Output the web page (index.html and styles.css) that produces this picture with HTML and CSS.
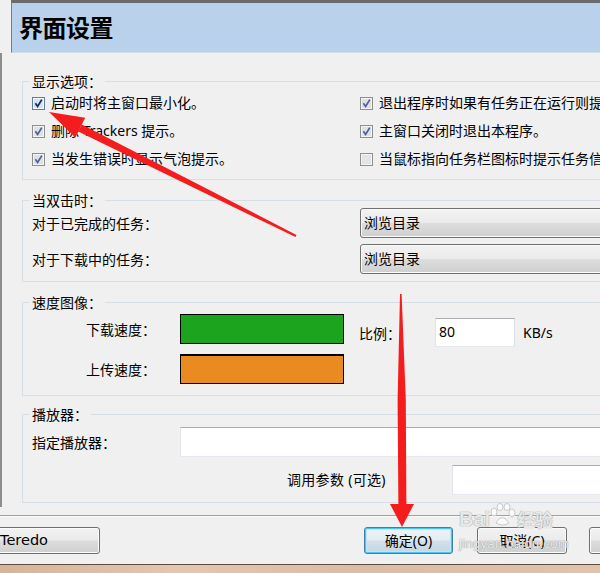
FILE: index.html
```html
<!DOCTYPE html>
<html lang="zh-CN">
<head>
<meta charset="utf-8">
<title>界面设置</title>
<link rel="stylesheet" href="styles.css">
</head>
<body>
<div class="window">
  <header class="titlebar"><h1 class="title">界面设置</h1></header>

  <div class="main">
    <fieldset class="group g1">
      <legend>显示选项：</legend>
      <div class="opts">
        <label class="chk"><svg class="cb focus" viewBox="0 0 13 13" width="13" height="13"><rect x="0.5" y="0.5" width="12" height="12" fill="#f6f9fc" stroke="#5b7fa8"/><rect x="2" y="2" width="9" height="9" fill="#d6e4f1"/><path d="M3.4 6.2 L5.6 9.4 L9.8 2.6" fill="none" stroke="#142a63" stroke-width="1.8"/></svg><span>启动时将主窗口最小化。</span></label>
        <label class="chk"><svg class="cb" viewBox="0 0 13 13" width="13" height="13"><rect x="0.5" y="0.5" width="12" height="12" fill="#f4f4f4" stroke="#8e8f8f"/><rect x="2" y="2" width="9" height="9" fill="#e0e1e3"/><path d="M3.4 6.2 L5.6 9.4 L9.8 2.6" fill="none" stroke="#4a5f9c" stroke-width="1.7"/></svg><span>退出程序时如果有任务正在运行则提示。</span></label>
        <label class="chk"><svg class="cb" viewBox="0 0 13 13" width="13" height="13"><rect x="0.5" y="0.5" width="12" height="12" fill="#f4f4f4" stroke="#8e8f8f"/><rect x="2" y="2" width="9" height="9" fill="#e0e1e3"/><path d="M3.4 6.2 L5.6 9.4 L9.8 2.6" fill="none" stroke="#4a5f9c" stroke-width="1.7"/></svg><span>删除 Trackers 提示。</span></label>
        <label class="chk"><svg class="cb" viewBox="0 0 13 13" width="13" height="13"><rect x="0.5" y="0.5" width="12" height="12" fill="#f4f4f4" stroke="#8e8f8f"/><rect x="2" y="2" width="9" height="9" fill="#e0e1e3"/><path d="M3.4 6.2 L5.6 9.4 L9.8 2.6" fill="none" stroke="#4a5f9c" stroke-width="1.7"/></svg><span>主窗口关闭时退出本程序。</span></label>
        <label class="chk"><svg class="cb" viewBox="0 0 13 13" width="13" height="13"><rect x="0.5" y="0.5" width="12" height="12" fill="#f4f4f4" stroke="#8e8f8f"/><rect x="2" y="2" width="9" height="9" fill="#e0e1e3"/><path d="M3.4 6.2 L5.6 9.4 L9.8 2.6" fill="none" stroke="#4a5f9c" stroke-width="1.7"/></svg><span>当发生错误时显示气泡提示。</span></label>
        <label class="chk"><svg class="cb" viewBox="0 0 13 13" width="13" height="13"><rect x="0.5" y="0.5" width="12" height="12" fill="#f4f4f4" stroke="#8e8f8f"/><rect x="2" y="2" width="9" height="9" fill="#e3e4e6"/></svg><span>当鼠标指向任务栏图标时提示任务信息。</span></label>
      </div>
    </fieldset>

    <fieldset class="group g2">
      <legend>当双击时：</legend>
      <div class="dbl">
        <span class="lbl">对于已完成的任务：</span>
        <div class="combo">浏览目录</div>
        <span class="lbl">对于下载中的任务：</span>
        <div class="combo">浏览目录</div>
      </div>
    </fieldset>

    <fieldset class="group g3">
      <legend>速度图像：</legend>
      <div class="speed">
        <div class="colors">
          <span class="rlbl">下载速度：</span>
          <div class="swatch down"></div>
          <span class="rlbl">上传速度：</span>
          <div class="swatch up"></div>
        </div>
        <div class="ratio">
          <span class="lbl">比例：</span>
          <div class="tb num">80</div>
          <span class="unit">KB/s</span>
        </div>
      </div>
    </fieldset>

    <fieldset class="group g4">
      <legend>播放器：</legend>
      <div class="player">
        <span class="lbl">指定播放器：</span>
        <div class="tb wide"></div>
      </div>
      <div class="args">
        <span class="argl">调用参数 (可选)</span>
        <div class="tb wide"></div>
      </div>
    </fieldset>
  </div>

  <div class="sep"></div>

  <div class="buttons">
    <div class="btn teredo">Teredo</div>
    <div class="btn default">确定(O)</div>
    <div class="btn cancel">取消(C)</div>
    <div class="btn extra"></div>
  </div>

  <div class="strip"></div>
</div>

<svg class="annot" width="600" height="573" viewBox="0 0 600 573">
  <polygon fill="#f41d1d" points="78.2,131.6 81.8,124.4 296.5,234.9 295.5,237.1"/>
  <polygon fill="#f41d1d" points="49,112 85.2,117.8 75.4,137.4"/>
  <polygon fill="#f41d1d" points="400,294 401.6,294 405.8,400 406.4,507 398.4,507 397.6,400"/>
  <polygon fill="#f41d1d" points="390,504 414,504 402,527"/>
</svg>

<div class="wm">
  <div class="wm-top"><span>Bai</span><svg class="paw" width="28" height="24" viewBox="0 0 28 24"><g fill="rgba(255,255,255,0.75)" stroke="#c9c9c9" stroke-width="1"><ellipse cx="6" cy="9" rx="3" ry="4"/><ellipse cx="12" cy="4" rx="3" ry="3.5"/><ellipse cx="19" cy="4" rx="3" ry="3.5"/><ellipse cx="24" cy="10" rx="3" ry="4"/><path d="M8 20 Q14 9 21 20 Q15 24 8 20Z"/></g></svg><span>经验</span></div>
  <div class="wm-url">jingyan.baidu.com</div>
</div>
</body>
</html>
```
FILE: styles.css
```css
html, body {
  margin: 0;
  padding: 0;
}

body {
  width: 600px;
  height: 573px;
  overflow: hidden;
  position: relative;
  background: #f0f0f0;
  color: #000;
  font-family: "Noto Sans", "Noto Sans CJK SC", sans-serif;
  font-size: 14px;
  line-height: 20px;
}

.window {
  width: 600px;
}

/* title bar */
.titlebar {
  margin-left: 11px;
  height: 49px;
  border-top: 3px solid #6b6b6b;
  border-left: 1px solid #7d7d7d;
  border-bottom: 1px solid #d3dde8;
  background: #b9d1ea;
  padding-left: 7px;
  display: flex;
  align-items: flex-start;
}

.title {
  margin: 0;
  padding-top: 9px;
  font-family: "Noto Sans CJK SC", sans-serif;
  font-size: 24px;
  font-weight: bold;
  line-height: 30px;
  letter-spacing: -0.5px;
}

/* main area */
.main {
  border-left: 2px solid #8c8c8c;
  padding: 21px 0 4px 20px;
  height: 454px;
  box-sizing: border-box;
}

.group {
  margin: 0;
  padding: 0 0 0 9px;
  border: 1px solid #d5dfe5;
  width: 700px;
  box-sizing: border-box;
  min-inline-size: 0;
}

.group legend {
  padding: 0 3px;
  margin-left: -3px;
  line-height: 15px;
  font-size: 14px;
  font-family: "Noto Sans CJK TC", "Noto Sans CJK SC", sans-serif;
}

.g1 { padding-bottom: 6px; }
.g2 { margin-top: 13px; padding-bottom: 7px; }
.g3 { margin-top: 13px; padding-top: 4px; padding-bottom: 11px; }
.g4 { margin-top: 11px; padding-top: 5px; padding-bottom: 7px; }

/* checkbox options */
.opts {
  display: grid;
  grid-template-columns: 328px 1fr;
  grid-auto-rows: 28px;
}

.chk {
  display: flex;
  align-items: center;
  gap: 6px;
  white-space: nowrap;
}

.cb {
  flex: none;
  display: block;
}

/* double click */
.dbl {
  display: grid;
  grid-template-columns: 328px 400px;
  grid-auto-rows: 30px;
  row-gap: 6px;
  align-items: center;
}

.lbl,
.rlbl {
  white-space: nowrap;
  font-family: "Noto Sans CJK TC", "Noto Sans CJK SC", sans-serif;
}

.combo {
  height: 30px;
  box-sizing: border-box;
  border: 1px solid #707070;
  border-radius: 3px;
  padding-left: 3px;
  line-height: 28px;
  background: linear-gradient(#f2f2f2 0%, #ebebeb 48%, #dddddd 52%, #cfcfcf 100%);
  box-shadow: inset 0 0 0 1px #fafafa;
  white-space: nowrap;
}

/* speed */
.speed {
  display: flex;
  align-items: flex-start;
}

.colors {
  display: grid;
  grid-template-columns: 124px 164px;
  grid-auto-rows: 30px;
  column-gap: 24px;
  row-gap: 10px;
  align-items: center;
}

.rlbl {
  text-align: right;
}

.swatch {
  height: 30px;
  box-sizing: border-box;
  border: 1px solid #000;
}

.swatch.down { background: #1da41f; }
.swatch.up { background: #e98b20; border-top-width: 2px; }

.ratio {
  margin-left: 15px;
  margin-top: 4px;
  height: 29px;
  display: flex;
  align-items: center;
  white-space: nowrap;
}

.tb {
  background: #fff;
  box-sizing: border-box;
  border: 1px solid;
  border-color: #abadb3 #dbdfe6 #e3e9ef #e2e3ea;
}

.num {
  margin-left: 34px;
  width: 80px;
  height: 29px;
  padding-left: 3px;
  line-height: 25px;
}

.unit {
  margin-left: 8px;
}

/* player */
.player {
  display: grid;
  grid-template-columns: 148px 460px;
  align-items: center;
  height: 30px;
}

.wide {
  height: 30px;
}

.args {
  margin-top: 8px;
  padding-left: 255px;
  display: grid;
  grid-template-columns: 165px 300px;
  align-items: center;
  height: 30px;
}

.argl {
  white-space: nowrap;
  letter-spacing: 0.3px;
}

/* separator & buttons */
.sep {
  margin-top: 8px;
  border-top: 1px solid #a0a0a0;
  border-bottom: 1px solid #fbfbfb;
}

.buttons {
  margin-top: 10px;
  height: 27px;
  display: flex;
}

.btn {
  height: 27px;
  box-sizing: border-box;
  border: 1px solid #707070;
  border-radius: 3px;
  background: linear-gradient(#f2f2f2 0%, #ebebeb 48%, #dddddd 52%, #cfcfcf 100%);
  box-shadow: inset 0 0 0 1px #fcfcfc;
  line-height: 25px;
  text-align: center;
  white-space: nowrap;
  flex: none;
}

.teredo {
  margin-left: -20px;
  width: 120px;
  text-align: left;
  padding-left: 19px;
  font-family: "DejaVu Sans", sans-serif;
  font-size: 14.5px;
}

.default {
  margin-left: 264px;
  width: 89px;
  border-color: #3c7fb1;
  background: linear-gradient(#eef5f9 0%, #e2ecf3 48%, #d3e0ea 52%, #c5d5e2 100%);
  box-shadow: inset 0 0 0 1px #48c6f5, inset 0 0 0 2px #bfe6f7;
}

.cancel {
  margin-left: 24px;
  width: 90px;
}

.extra {
  margin-left: 22px;
  width: 100px;
}

.strip {
  margin-top: 10px;
  height: 9px;
  border-top: 1px solid #5c4c42;
  background: linear-gradient(90deg, #d6b498 0%, #e5c7ae 30%, #dcbca2 60%, #e2c3a9 100%);
}

/* annotations over the screenshot */
.annot {
  position: absolute;
  left: 0;
  top: 0;
  pointer-events: none;
}

.wm {
  position: absolute;
  left: 459px;
  top: 503px;
  pointer-events: none;
  color: rgba(255, 255, 255, 0.8);
  text-shadow: 0 0 1px #9a9a9a, 0 0 1px #9a9a9a;
}

.wm-top {
  display: flex;
  align-items: flex-end;
  font-family: "Liberation Sans", sans-serif;
  font-size: 20px;
  line-height: 24px;
  font-weight: bold;
}

.wm-top span:last-child {
  font-family: "Noto Sans CJK SC", sans-serif;
  font-size: 18px;
}

.paw {
  margin: 0 1px 4px -2px;
}

.wm-url {
  font-family: "Liberation Sans", sans-serif;
  font-size: 13px;
  line-height: 14px;
  margin-top: 6px;
  letter-spacing: 0.3px;
}
```
